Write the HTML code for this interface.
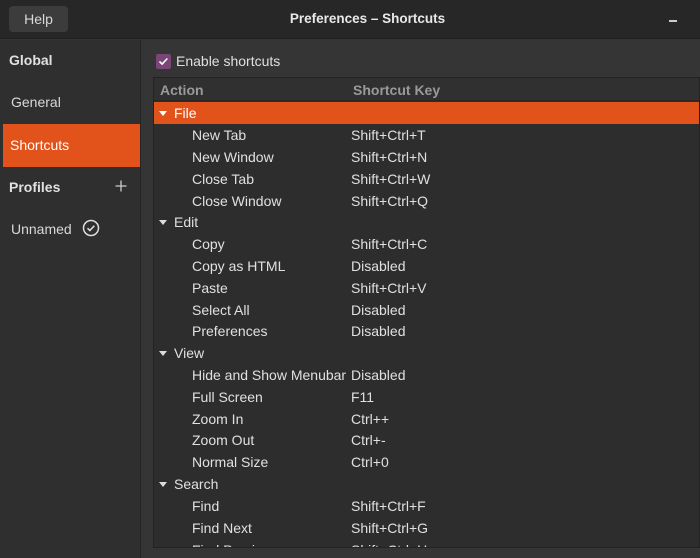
<!DOCTYPE html>
<html><head><style>
*{margin:0;padding:0;box-sizing:border-box}
body{width:700px;height:558px;overflow:hidden;background:#353535;font-family:"Liberation Sans","DejaVu Sans",sans-serif;color:#e0e0e0;font-size:14px;position:relative}
.abs{position:absolute}
.title{left:0;top:0;width:700px;height:39px;background:#272727;border-bottom:1px solid #1e1e1e}
.help{left:9px;top:6px;width:59px;height:26px;background:#3c3c3c;border-radius:4px;color:#d8d8d8;text-align:center;line-height:26px;font-size:14px}
.ttl{left:0;width:735px;top:11px;text-align:center;font-weight:bold;color:#e8e8e8;font-size:13.5px}
.side{left:0;top:40px;width:141px;height:518px;background:#2f2f2f;border-right:1px solid #262626}
.tree{left:153px;top:77px;width:547px;height:471px;background:#2d2d2d;border:1px solid #232323;overflow:hidden}
.hdr{left:0;top:0;width:547px;height:23px;background:#303030;border-bottom:1px solid #262626;color:#9a9a9a;font-weight:bold}
.r{position:absolute;left:0;width:547px;height:22px;line-height:22px}
.r .a{position:absolute;left:38px}
.r .k{position:absolute;left:197px}
.r .c{position:absolute;left:20px}
.tri{position:absolute;left:5px;top:9px;width:0;height:0;border-left:4px solid transparent;border-right:4px solid transparent;border-top:5px solid #ddd}
</style></head><body>
<div class="abs title"></div>
<div class="abs help">Help</div>
<div class="abs ttl">Preferences – Shortcuts</div>
<div class="abs" style="left:669px;top:20px;width:8px;height:1.5px;background:#ccc"></div>
<div class="abs side"></div>
<div class="abs" style="left:9px;top:52px;font-weight:bold">Global</div>
<div class="abs" style="left:11px;top:94px;color:#d8d8d8">General</div>
<div class="abs" style="left:3px;top:124px;width:137px;height:43px;background:#e2531b"></div>
<div class="abs" style="left:10px;top:137px;color:#fff">Shortcuts</div>
<div class="abs" style="left:9px;top:179px;font-weight:bold">Profiles</div>
<svg class="abs" style="left:115px;top:180px" width="12" height="12" viewBox="0 0 12 12"><path d="M6 0.5v11M0.5 6h11" stroke="#ccc" stroke-width="1.3"/></svg>
<div class="abs" style="left:11px;top:221px;color:#d8d8d8">Unnamed</div>
<svg class="abs" style="left:82px;top:219px" width="18" height="18" viewBox="0 0 18 18"><circle cx="9" cy="9" r="7.5" fill="none" stroke="#ddd" stroke-width="1.5"/><path d="M5.5 9.2l2.3 2.3 4.5-4.7" fill="none" stroke="#ddd" stroke-width="1.6"/></svg>
<div class="abs" style="left:156px;top:54px;width:15px;height:15px;background:#7a4577;border-radius:2px"></div>
<svg class="abs" style="left:156px;top:54px" width="15" height="15" viewBox="0 0 15 15"><path d="M3.5 7.5l2.6 2.6 5.2-5.6" fill="none" stroke="#fff" stroke-width="1.6"/></svg>
<div class="abs" style="left:176px;top:53px;color:#e0e0e0">Enable shortcuts</div>
<div class="abs tree">
<div class="abs hdr"><span class="abs" style="left:6px;top:4px">Action</span><span class="abs" style="left:199px;top:4px">Shortcut Key</span></div>
<div class="r" style="top:24px;background:#e2531b;color:#fff"><span class="tri" style="border-top-color:#fff"></span><span class="c">File</span></div>
<div class="r" style="top:46px"><span class="a">New Tab</span><span class="k">Shift+Ctrl+T</span></div>
<div class="r" style="top:68px"><span class="a">New Window</span><span class="k">Shift+Ctrl+N</span></div>
<div class="r" style="top:90px"><span class="a">Close Tab</span><span class="k">Shift+Ctrl+W</span></div>
<div class="r" style="top:112px"><span class="a">Close Window</span><span class="k">Shift+Ctrl+Q</span></div>
<div class="r" style="top:133px"><span class="tri"></span><span class="c">Edit</span></div>
<div class="r" style="top:155px"><span class="a">Copy</span><span class="k">Shift+Ctrl+C</span></div>
<div class="r" style="top:177px"><span class="a">Copy as HTML</span><span class="k">Disabled</span></div>
<div class="r" style="top:199px"><span class="a">Paste</span><span class="k">Shift+Ctrl+V</span></div>
<div class="r" style="top:221px"><span class="a">Select All</span><span class="k">Disabled</span></div>
<div class="r" style="top:242px"><span class="a">Preferences</span><span class="k">Disabled</span></div>
<div class="r" style="top:264px"><span class="tri"></span><span class="c">View</span></div>
<div class="r" style="top:286px"><span class="a">Hide and Show Menubar</span><span class="k">Disabled</span></div>
<div class="r" style="top:308px"><span class="a">Full Screen</span><span class="k">F11</span></div>
<div class="r" style="top:330px"><span class="a">Zoom In</span><span class="k">Ctrl++</span></div>
<div class="r" style="top:351px"><span class="a">Zoom Out</span><span class="k">Ctrl+-</span></div>
<div class="r" style="top:373px"><span class="a">Normal Size</span><span class="k">Ctrl+0</span></div>
<div class="r" style="top:395px"><span class="tri"></span><span class="c">Search</span></div>
<div class="r" style="top:417px"><span class="a">Find</span><span class="k">Shift+Ctrl+F</span></div>
<div class="r" style="top:439px"><span class="a">Find Next</span><span class="k">Shift+Ctrl+G</span></div>
<div class="r" style="top:461px"><span class="a">Find Previous</span><span class="k">Shift+Ctrl+H</span></div>
</div>
</body></html>
